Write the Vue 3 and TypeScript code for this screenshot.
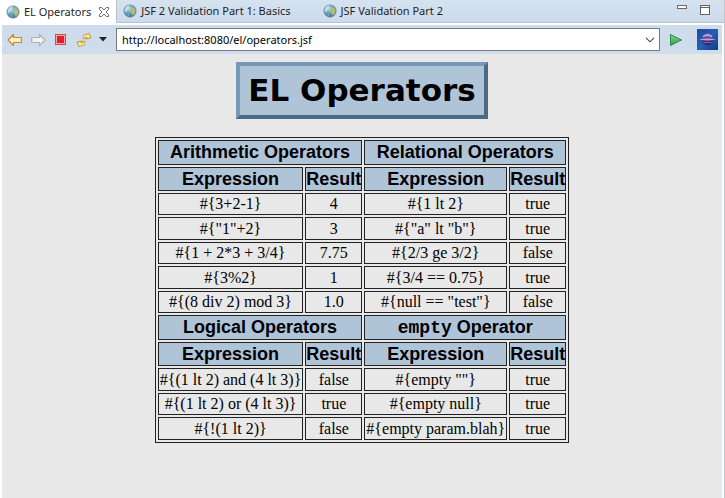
<script setup lang="ts">
import { ref } from 'vue'

interface Tab { title: string; active: boolean }
interface Heading { title: string; code?: string }
interface Section { headings: Heading[]; rows: string[][] }

const tabs: Tab[] = [
  { title: 'EL Operators', active: true },
  { title: 'JSF 2 Validation Part 1: Basics', active: false },
  { title: 'JSF Validation Part 2', active: false },
]

const address = ref('http://localhost:8080/el/operators.jsf')

const sections: Section[] = [
  {
    headings: [{ title: 'Arithmetic Operators' }, { title: 'Relational Operators' }],
    rows: [
      ['#{3+2-1}', '4', '#{1 lt 2}', 'true'],
      ['#{"1"+2}', '3', '#{"a" lt "b"}', 'true'],
      ['#{1 + 2*3 + 3/4}', '7.75', '#{2/3 ge 3/2}', 'false'],
      ['#{3%2}', '1', '#{3/4 == 0.75}', 'true'],
      ['#{(8 div 2) mod 3}', '1.0', '#{null == "test"}', 'false'],
    ],
  },
  {
    headings: [{ title: 'Logical Operators' }, { title: 'Operator', code: 'empty' }],
    rows: [
      ['#{(1 lt 2) and (4 lt 3)}', 'false', '#{empty ""}', 'true'],
      ['#{(1 lt 2) or (4 lt 3)}', 'true', '#{empty null}', 'true'],
      ['#{!(1 lt 2)}', 'false', '#{empty param.blah}', 'true'],
    ],
  },
]
</script>

<template>
  <div class="window">
    <svg class="defs" aria-hidden="true">
      <defs>
        <radialGradient id="sea" cx="0.4" cy="0.3" r="0.75">
          <stop offset="0" stop-color="#b5dcf0" />
          <stop offset="0.5" stop-color="#5f9dc4" />
          <stop offset="1" stop-color="#3b6c96" />
        </radialGradient>
        <linearGradient id="go" x1="0" y1="0" x2="0" y2="1">
          <stop offset="0" stop-color="#8fd08f" />
          <stop offset="1" stop-color="#2f9e48" />
        </linearGradient>
        <linearGradient id="badge" x1="0" y1="0" x2="1" y2="1">
          <stop offset="0" stop-color="#1a4a9c" />
          <stop offset="0.5" stop-color="#2461b8" />
          <stop offset="1" stop-color="#123a86" />
        </linearGradient>
        <linearGradient id="planet" x1="0" y1="0" x2="0" y2="1">
          <stop offset="0" stop-color="#a58ad0" />
          <stop offset="0.5" stop-color="#4a2f78" />
          <stop offset="1" stop-color="#33195e" />
        </linearGradient>
      </defs>
    </svg>

    <header class="tabbar">
      <nav class="tabs" aria-label="Open pages">
        <div v-for="tab in tabs" :key="tab.title" class="tab" :class="{ active: tab.active }">
          <button class="tab-label" type="button">
            <svg width="14" height="14" viewBox="0 0 14 14" aria-hidden="true">
              <circle cx="7" cy="7" r="6.2" fill="url(#sea)" stroke="#7d98ab" stroke-width="0.7" />
              <path d="M2 4.5 4 2 6.8 1.6 6 3.4 4.6 4.4 5.2 6 3.6 7 3 9 1.6 7.6Z" fill="#dcebdc" opacity="0.7" />
              <path d="M7.2 4.4 9.6 3 12 4.8 12.6 7.4 11 10.4 9.2 11.6 8.6 8.8 6.8 7.6Z" fill="#b5bd78" />
              <path d="M4 9.6 6 9.8 6.4 12.2 4.6 11.6Z" fill="#7fae9a" />
            </svg>
            <span>{{ tab.title }}</span>
          </button>
          <button v-if="tab.active" class="plain" type="button" aria-label="Close tab">
            <svg width="12" height="12" viewBox="0 0 12 12" aria-hidden="true">
              <path d="M1.5 1.5H3.6L6 4 8.4 1.5H10.5V3.4L8 6 10.5 8.6V10.5H8.4L6 8 3.6 10.5H1.5V8.6L4 6 1.5 3.4Z" fill="#fff" stroke="#686868" />
            </svg>
          </button>
        </div>
      </nav>
      <div class="controls">
        <button class="plain" type="button" aria-label="Minimize">
          <svg width="10" height="12" viewBox="0 0 10 12" aria-hidden="true"><rect x="0.5" y="1.5" width="9" height="3" fill="#fff" stroke="#686868" /></svg>
        </button>
        <button class="plain" type="button" aria-label="Maximize">
          <svg width="10" height="12" viewBox="0 0 10 12" aria-hidden="true"><rect x="0.5" y="1.5" width="9" height="9" fill="#fff" stroke="#606060" /><path d="M1 3.5H9" stroke="#606060" /></svg>
        </button>
      </div>
    </header>

    <div class="toolbar">
      <div class="tools">
        <button class="plain" type="button" aria-label="Back">
          <svg width="16" height="14" viewBox="0 0 16 14" aria-hidden="true"><path d="M1 7 6.5 1.5V4.5H14.3V9.5H6.5V12.5Z" fill="#fff3c4" stroke="#c48a24" stroke-width="1.2" stroke-linejoin="round" /></svg>
        </button>
        <button class="plain" type="button" aria-label="Forward">
          <svg width="16" height="14" viewBox="0 0 16 14" aria-hidden="true"><path d="M15 7 9.5 1.5V4.5H1.7V9.5H9.5V12.5Z" fill="#f2f2f2" stroke="#b2b2b2" stroke-width="1.2" stroke-linejoin="round" /></svg>
        </button>
        <button class="plain" type="button" aria-label="Stop">
          <svg width="16" height="14" viewBox="0 0 16 14" aria-hidden="true"><rect x="2.5" y="1.5" width="10" height="10" fill="#f4a5a5" stroke="#d5494c" /><rect x="4" y="3" width="7" height="7" fill="#e01f2d" /></svg>
        </button>
        <button class="plain" type="button" aria-label="Refresh">
          <svg width="16" height="16" viewBox="0 0 16 16" aria-hidden="true">
            <path d="M7.4 6.6C6.6 3.6 8.6 1.6 11.2 2.4L12.6 1 15 6 9.8 7 11 5.2C9.8 4.6 9.2 5.2 9.4 6.6Z" fill="#ffe9a0" stroke="#c48a24" stroke-width="0.9" stroke-linejoin="round" />
            <path d="M8.6 9.4C9.4 12.4 7.4 14.4 4.8 13.6L3.4 15 1 10 6.2 9 5 10.8C6.2 11.4 6.8 10.8 6.6 9.4Z" fill="#ffe9a0" stroke="#c48a24" stroke-width="0.9" stroke-linejoin="round" />
          </svg>
        </button>
        <button class="plain" type="button" aria-label="Refresh options">
          <svg width="8" height="5" viewBox="0 0 8 5" aria-hidden="true"><path d="M0 0H8L4 4.5Z" fill="#222" /></svg>
        </button>
      </div>
      <div class="address">
        <input v-model="address" type="text" aria-label="Address" spellcheck="false" />
        <button class="plain" type="button" aria-label="Recent addresses">
          <svg width="10" height="6" viewBox="0 0 10 6" aria-hidden="true"><path d="M1 0.8 5 4.8 9 0.8" fill="none" stroke="#444" stroke-width="1.1" /></svg>
        </button>
      </div>
      <button class="plain" type="button" aria-label="Go">
        <svg width="14" height="14" viewBox="0 0 14 14" aria-hidden="true"><path d="M1.5 1.5 12.5 7 1.5 12.5Z" fill="url(#go)" stroke="#2c8a45" stroke-linejoin="round" /></svg>
      </button>
      <a class="logo" href="#" aria-label="Home">
        <svg width="21" height="21" viewBox="0 0 21 21" aria-hidden="true">
          <rect width="21" height="21" fill="url(#badge)" />
          <circle cx="10.5" cy="10.5" r="5.8" fill="url(#planet)" />
          <path d="M6.2 7.6Q10.5 4.4 14.8 7.6" fill="none" stroke="#c5aee4" stroke-width="1.4" />
          <path d="M2 10.5Q10.5 8.6 19 10.5Q10.5 12.4 2 10.5Z" fill="#b9a5e8" />
          <path d="M6.5 13.6H14.5" stroke="#8e6cc0" />
        </svg>
      </a>
    </div>

    <main class="page">
      <h1>EL Operators</h1>
      <table>
        <tbody>
          <template v-for="(section, s) in sections" :key="s">
            <tr class="group">
              <th v-for="heading in section.headings" :key="heading.title" colspan="2" scope="colgroup">
                <template v-if="heading.code"><code>{{ heading.code }}</code>&nbsp;</template>{{ heading.title }}
              </th>
            </tr>
            <tr class="columns">
              <template v-for="n in 2" :key="n">
                <th scope="col">Expression</th>
                <th scope="col">Result</th>
              </template>
            </tr>
            <tr v-for="row in section.rows" :key="row[0]">
              <td v-for="(cell, c) in row" :key="c">{{ cell }}</td>
            </tr>
          </template>
        </tbody>
      </table>
    </main>
  </div>
</template>

<style>
body {
  margin: 0;
  background: #fff;
}
</style>

<style scoped>
* {
  box-sizing: border-box;
}
.window {
  display: flex;
  flex-direction: column;
  min-height: 100vh;
  border-right: 1px solid #c4c8cc;
  font: 11px/16px "Noto Sans", "Open Sans", sans-serif;
  color: #1e1e1e;
}
.defs {
  position: absolute;
  width: 0;
  height: 0;
}
svg {
  display: block;
  flex: none;
}
button {
  padding: 0;
  border: 0;
  background: none;
  font: inherit;
  color: inherit;
}
.tabbar {
  display: flex;
  justify-content: space-between;
  height: 23px;
  background: linear-gradient(#d5e2f0, #ccdaea);
  border-bottom: 1px solid #b6c1cd;
}
.tabs {
  display: flex;
}
.tab {
  display: flex;
  align-items: center;
  gap: 7px;
  height: 22px;
  padding: 0 26px 0 6px;
  white-space: nowrap;
}
.tab.active {
  height: 23px;
  padding-right: 6px;
  background: #fff;
  border-right: 1px solid #b6c1cd;
}
.tab-label {
  display: flex;
  align-items: center;
  gap: 4px;
}
.controls {
  display: flex;
  gap: 13px;
  padding: 4px 14px 0 0;
  align-items: flex-start;
}
.toolbar {
  display: flex;
  align-items: center;
  gap: 9px;
  height: 29px;
  margin: 2px 2px 0;
  padding: 0 4px 0 5px;
  background: #cfdcec;
}
.tools {
  display: flex;
  align-items: center;
  gap: 7px;
}
.address {
  display: flex;
  flex: 1;
  align-items: center;
  height: 23px;
  padding: 0 4px 0 5px;
  background: #fff;
  border: 1px solid #767a80;
}
.address input {
  flex: 1;
  min-width: 0;
  padding: 0;
  border: 0;
  outline: 0;
  background: none;
  font: inherit;
  color: #000;
}
.logo {
  margin-left: 5px;
}
.page {
  display: flex;
  flex: 1;
  flex-direction: column;
  align-items: center;
  gap: 18px;
  margin: 0 2px;
  padding: 8px 0 16px;
  background: #e8e8e8;
  color: #000;
}
h1 {
  margin: 0;
  padding: 0 8px;
  border: 4px solid;
  border-color: #7699b9 #4d6a85 #4d6a85 #7699b9;
  background: #b0c4d8;
  font: bold 31px/49px "DejaVu Sans", Verdana, sans-serif;
}
table {
  border: 1px solid #222;
  border-spacing: 2px;
  font: 16px/20px "Liberation Serif", "Times New Roman", serif;
  text-align: center;
  white-space: nowrap;
}
th,
td {
  padding: 0 1px;
  border: 1px solid #222;
}
th {
  padding: 0;
  background: #b0c4d8;
  font: bold 18px/22px "Liberation Sans", Arial, sans-serif;
}
.group th {
  line-height: 23px;
}
tr:nth-child(even) td {
  line-height: 21px;
}
code {
  font: bold 18px/20px "Liberation Mono", "Courier New", monospace;
}
</style>
